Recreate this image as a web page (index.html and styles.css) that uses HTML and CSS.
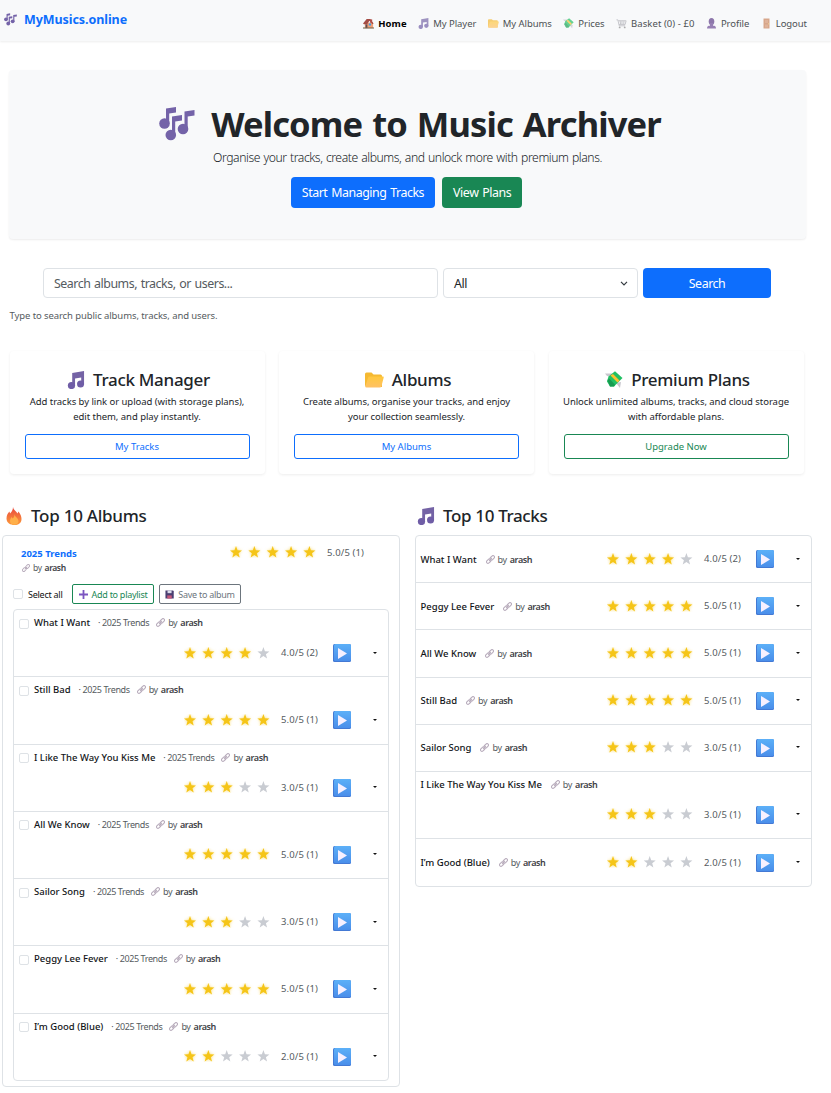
FILE: index.html
```html
<!DOCTYPE html>
<html lang="en">
<head>
<meta charset="utf-8">
<title>MyMusics.online</title>
<link rel="stylesheet" href="styles.css">
</head>
<body>
<svg class="sprite" aria-hidden="true">
  <defs>
    <path id="star" d="M6 0 7.5 4.2 12 4.4 8.5 7.2 9.7 11.6 6 9.1 2.3 11.6 3.5 7.2 0 4.4 4.500 4.200Z"/>
    <linearGradient id="blue" x1="0" y1="0" x2="0" y2="1"><stop offset="0" stop-color="#5cb0f8"/><stop offset="1" stop-color="#4a8eea"/></linearGradient>
    <linearGradient id="gold" x1="0" y1="0" x2="0" y2="1"><stop offset="0" stop-color="#ffc83d"/><stop offset="1" stop-color="#ffc164"/></linearGradient>
    <linearGradient id="flame" x1="0" y1="0" x2="0" y2="1"><stop offset="0" stop-color="#e8483e"/><stop offset="1" stop-color="#fd9a3a"/></linearGradient>
  </defs>
  <symbol id="stars5" viewBox="0 0 86 12"><g class="lit"><use href="#star"/><use href="#star" x="18.350"/><use href="#star" x="36.700"/><use href="#star" x="55.050"/><use href="#star" x="73.400"/></g></symbol>
  <symbol id="stars4" viewBox="0 0 86 12"><g class="lit"><use href="#star"/><use href="#star" x="18.350"/><use href="#star" x="36.700"/><use href="#star" x="55.050"/></g><g class="dim"><use href="#star" x="73.400"/></g></symbol>
  <symbol id="stars3" viewBox="0 0 86 12"><g class="lit"><use href="#star"/><use href="#star" x="18.350"/><use href="#star" x="36.700"/></g><g class="dim"><use href="#star" x="55.050"/><use href="#star" x="73.400"/></g></symbol>
  <symbol id="stars2" viewBox="0 0 86 12"><g class="lit"><use href="#star"/><use href="#star" x="18.350"/></g><g class="dim"><use href="#star" x="36.700"/><use href="#star" x="55.050"/><use href="#star" x="73.400"/></g></symbol>
  <symbol id="play" viewBox="0 0 18 18"><rect width="18" height="18" rx="1.500" fill="#4379d4"/><rect x="1" width="17" height="17" rx="1.500" fill="url(#blue)"/><path d="M5 4v11l9-5.500Z" fill="#f7f0ff"/></symbol>
  <symbol id="link" viewBox="0 0 20 20"><g fill="none" stroke="#b9adbd" stroke-width="2.400"><rect x="8.500" y="3" width="11" height="6.500" rx="3.200" transform="rotate(-45 14 6.200)"/><rect x=".5" y="10.500" width="11" height="6.500" rx="3.200" transform="rotate(-45 6 13.800)"/><path d="m7 13 6-6"/></g></symbol>
  <symbol id="note" viewBox="0 0 18 19"><path d="M5 2 17.500 0v14.500h-3V6.800L8 7.900v8H5Z" fill="#7463a5"/><circle cx="4.200" cy="15.300" r="3.800" fill="#6f5da6"/><circle cx="13.800" cy="13.600" r="3.700" fill="#6f5da6"/></symbol>
  <symbol id="notes" viewBox="0 0 36 34"><g fill="#7463a8"><path d="M7 1.500 17 0v5.500L10.200 6.500v10H7ZM13 9.500 23 8v5.500l-6.800 1v14H13ZM25.500 4.500 35.500 3v5.500l-6.800 1v13h-3.200Z"/><circle cx="5.500" cy="16.500" r="5.300"/><circle cx="11.800" cy="28" r="5.300"/><circle cx="24" cy="22" r="5.300"/></g></symbol>
  <symbol id="folder" viewBox="0 0 19 16"><path d="M0 2Q0 .5 1.500.5h5L8.500 2.500h7Q17 2.500 17 4v11H2Q0 15 0 13Z" fill="#f5b932"/><path d="M4.500 4.500H18Q19 4.500 18.700 5.600L16.500 14Q16.200 15.500 14.700 15.500H1.500Q0 15.500.4 14L3 5.700Q3.300 4.500 4.500 4.500Z" fill="url(#gold)"/></symbol>
  <symbol id="money" viewBox="0 0 18 18"><path d="M0 2.500h7l1 3-6-.5ZM11 12l5-1-1 6Z" fill="#c9c7ce"/><path d="M3.500 5.500 10 .3 17.500 7 9 15.500H5L2 10.500Z" fill="#21c063"/><path d="m2.500 9 2-1.200 5.500 6-1 1.700H5Z" fill="#169b50"/><path d="M5.500 4.500 8 3l6.500 6.500-2 2Z" fill="#fcc22f"/></symbol>
  <symbol id="house" viewBox="0 0 12 11"><path d="M2 4.500h9v6H2Z" fill="#f0a078"/><path d="M0 5.500 4 .5h4l3.500 5-1 .8L7 2.500 4.500 6.300H1Z" fill="#a44c45"/><path d="M8 1h2v4H8Z" fill="#b0504a"/><path d="M2.800 6.500h2v4h-2Z" fill="#5d4a51"/><path d="M6.300 5.500h2.500v2.200H6.300Z" fill="#3a9de5"/><path d="M0 9.800h12V11H0Z" fill="#7a6a50"/></symbol>
  <symbol id="cart" viewBox="0 0 12 11"><path d="M.5 1.500H2L3.500 8H10M2.500 2.500H11L10 6.500H3.300M4.500 2.500l.5 4M6.500 2.500v4M8.700 2.500l-.3 4" fill="none" stroke="#a9a9b0"/><circle cx="4" cy="9.800" r="1" fill="#888"/><circle cx="9.500" cy="9.800" r="1" fill="#888"/></symbol>
  <symbol id="bust" viewBox="0 0 11 11"><ellipse cx="5.500" cy="3.500" rx="2.800" ry="3.500" fill="#5c3b86"/><path d="M4 5h3v3H4ZM1 10.500Q1 7.500 4 7.500h3q3 0 3 3Z" fill="#6a4794"/></symbol>
  <symbol id="door" viewBox="0 0 11 11"><path d="M2.500.5h6v10h-6Z" fill="#c87f56"/><path d="M4 2h3v3H4ZM4 6.500h3v3H4Z" fill="#d4936e"/><circle cx="7.600" cy="5.800" r=".6" fill="#f1c75c"/></symbol>
  <symbol id="fire" viewBox="0 0 15 18"><path d="M6.500 0c.5 3 3 4 4.500 6.500l1-2c2 2.500 3 5 3 7.500 0 4-3 6-7 6s-8-2-8-6.500C0 8 1.500 6 3 4.500l.5 2C5 5 6.500 3 6.500 0Z" fill="url(#flame)"/><path d="M8 7c0 3 4 4 4 7.300 0 2.200-1.800 3.500-4.200 3.500S3.500 16.500 3.500 14c0-2 1-3 1.500-4l1 1.500C7.500 10.500 8 9 8 7Z" fill="#ffb04a"/></symbol>
  <symbol id="plus" viewBox="0 0 9 9"><path d="M3.600 0h1.800v3.600H9v1.800H5.400V9H3.600V5.400H0V3.600h3.600Z" fill="#7b55c0"/></symbol>
  <symbol id="floppy" viewBox="0 0 10 9"><path d="M.5 0H9l.7.8V9H.5Z" fill="#4a3f72"/><path d="M2.800 0h4.500v3H2.800Z" fill="#d9dbea"/><path d="M2.500 5.500h5V9h-5Z" fill="#c85a7c"/></symbol>
</svg>

<nav class="navbar">
  <a class="brand"><svg class="brand-icon"><use href="#notes"/></svg>MyMusics.online</a>
  <div class="nav-links">
    <a class="nav-link active"><svg><use href="#house"/></svg>Home</a>
    <a class="nav-link"><svg><use href="#note"/></svg>My Player</a>
    <a class="nav-link"><svg><use href="#folder"/></svg>My Albums</a>
    <a class="nav-link"><svg><use href="#money"/></svg>Prices</a>
    <a class="nav-link basket"><svg><use href="#cart"/></svg>Basket (0) - £0</a>
    <a class="nav-link"><svg><use href="#bust"/></svg>Profile</a>
    <a class="nav-link"><svg><use href="#door"/></svg>Logout</a>
  </div>
</nav>

<header class="hero">
  <h1><svg><use href="#notes"/></svg><span>Welcome to Music Archiver</span></h1>
  <p class="lead">Organise your tracks, create albums, and unlock more with premium plans.</p>
  <div class="hero-actions"><a class="btn primary">Start Managing Tracks</a><a class="btn success">View Plans</a></div>
</header>

<form class="search">
  <div class="field">Search albums, tracks, or users...</div>
  <div class="field select">All<svg viewBox="0 0 8 5"><path d="m1 .8 3 3 3-3" fill="none" stroke="#343a40" stroke-width="1.200"/></svg></div>
  <a class="btn primary">Search</a>
</form>
<p class="help">Type to search public albums, tracks, and users.</p>

<section class="cards">
  <article class="card">
    <h2><svg class="w18"><use href="#note"/></svg>Track Manager</h2>
    <p>Add tracks by link or upload (with storage plans),<br>edit them, and play instantly.</p>
    <a class="outline">My Tracks</a>
  </article>
  <article class="card">
    <h2><svg class="w19"><use href="#folder"/></svg>Albums</h2>
    <p>Create albums, organise your tracks, and enjoy<br>your collection seamlessly.</p>
    <a class="outline">My Albums</a>
  </article>
  <article class="card">
    <h2><svg class="w18"><use href="#money"/></svg>Premium Plans</h2>
    <p>Unlock unlimited albums, tracks, and cloud storage<br>with affordable plans.</p>
    <a class="outline green">Upgrade Now</a>
  </article>
</section>

<main class="columns">
  <section class="albums">
    <h2><svg><use href="#fire"/></svg>Top 10 Albums</h2>
    <div class="album">
      <div class="album-head">
        <div><a class="album-title">2025 Trends</a><div class="by"><svg><use href="#link"/></svg>by <b>arash</b></div></div>
        <div class="album-rating"><svg class="stars"><use href="#stars5"/></svg><span class="score">5.0/5 (1)</span></div>
      </div>
      <div class="tools"><i class="check"></i><span class="select-all">Select all</span><a class="tool green"><svg><use href="#plus"/></svg>Add to playlist</a><a class="tool"><svg><use href="#floppy"/></svg>Save to album</a></div>
      <div class="list">
        <div class="track"><div class="info"><i class="check"></i><span class="name">What I Want</span><span class="from">· 2025 Trends</span><span class="by"><svg><use href="#link"/></svg>by <b>arash</b></span></div><div class="controls"><svg class="stars"><use href="#stars4"/></svg><span class="score">4.0/5 (2)</span><svg class="play"><use href="#play"/></svg><i class="caret"></i></div></div>
        <div class="track"><div class="info"><i class="check"></i><span class="name">Still Bad</span><span class="from">· 2025 Trends</span><span class="by"><svg><use href="#link"/></svg>by <b>arash</b></span></div><div class="controls"><svg class="stars"><use href="#stars5"/></svg><span class="score">5.0/5 (1)</span><svg class="play"><use href="#play"/></svg><i class="caret"></i></div></div>
        <div class="track"><div class="info"><i class="check"></i><span class="name">I Like The Way You Kiss Me</span><span class="from">· 2025 Trends</span><span class="by"><svg><use href="#link"/></svg>by <b>arash</b></span></div><div class="controls"><svg class="stars"><use href="#stars3"/></svg><span class="score">3.0/5 (1)</span><svg class="play"><use href="#play"/></svg><i class="caret"></i></div></div>
        <div class="track"><div class="info"><i class="check"></i><span class="name">All We Know</span><span class="from">· 2025 Trends</span><span class="by"><svg><use href="#link"/></svg>by <b>arash</b></span></div><div class="controls"><svg class="stars"><use href="#stars5"/></svg><span class="score">5.0/5 (1)</span><svg class="play"><use href="#play"/></svg><i class="caret"></i></div></div>
        <div class="track"><div class="info"><i class="check"></i><span class="name">Sailor Song</span><span class="from">· 2025 Trends</span><span class="by"><svg><use href="#link"/></svg>by <b>arash</b></span></div><div class="controls"><svg class="stars"><use href="#stars3"/></svg><span class="score">3.0/5 (1)</span><svg class="play"><use href="#play"/></svg><i class="caret"></i></div></div>
        <div class="track"><div class="info"><i class="check"></i><span class="name">Peggy Lee Fever</span><span class="from">· 2025 Trends</span><span class="by"><svg><use href="#link"/></svg>by <b>arash</b></span></div><div class="controls"><svg class="stars"><use href="#stars5"/></svg><span class="score">5.0/5 (1)</span><svg class="play"><use href="#play"/></svg><i class="caret"></i></div></div>
        <div class="track"><div class="info"><i class="check"></i><span class="name">I’m Good (Blue)</span><span class="from">· 2025 Trends</span><span class="by"><svg><use href="#link"/></svg>by <b>arash</b></span></div><div class="controls"><svg class="stars"><use href="#stars2"/></svg><span class="score">2.0/5 (1)</span><svg class="play"><use href="#play"/></svg><i class="caret"></i></div></div>
      </div>
    </div>
  </section>
  <section class="tracks">
    <h2><svg><use href="#note"/></svg>Top 10 Tracks</h2>
    <div class="list">
      <div class="row"><div class="info"><span class="name">What I Want</span><span class="by"><svg><use href="#link"/></svg>by <b>arash</b></span></div><div class="controls"><svg class="stars"><use href="#stars4"/></svg><span class="score">4.0/5 (2)</span><svg class="play"><use href="#play"/></svg><i class="caret"></i></div></div>
      <div class="row"><div class="info"><span class="name">Peggy Lee Fever</span><span class="by"><svg><use href="#link"/></svg>by <b>arash</b></span></div><div class="controls"><svg class="stars"><use href="#stars5"/></svg><span class="score">5.0/5 (1)</span><svg class="play"><use href="#play"/></svg><i class="caret"></i></div></div>
      <div class="row"><div class="info"><span class="name">All We Know</span><span class="by"><svg><use href="#link"/></svg>by <b>arash</b></span></div><div class="controls"><svg class="stars"><use href="#stars5"/></svg><span class="score">5.0/5 (1)</span><svg class="play"><use href="#play"/></svg><i class="caret"></i></div></div>
      <div class="row"><div class="info"><span class="name">Still Bad</span><span class="by"><svg><use href="#link"/></svg>by <b>arash</b></span></div><div class="controls"><svg class="stars"><use href="#stars5"/></svg><span class="score">5.0/5 (1)</span><svg class="play"><use href="#play"/></svg><i class="caret"></i></div></div>
      <div class="row"><div class="info"><span class="name">Sailor Song</span><span class="by"><svg><use href="#link"/></svg>by <b>arash</b></span></div><div class="controls"><svg class="stars"><use href="#stars3"/></svg><span class="score">3.0/5 (1)</span><svg class="play"><use href="#play"/></svg><i class="caret"></i></div></div>
      <div class="row wrap"><div class="info"><span class="name">I Like The Way You Kiss Me</span><span class="by"><svg><use href="#link"/></svg>by <b>arash</b></span></div><div class="controls"><svg class="stars"><use href="#stars3"/></svg><span class="score">3.0/5 (1)</span><svg class="play"><use href="#play"/></svg><i class="caret"></i></div></div>
      <div class="row"><div class="info"><span class="name">I’m Good (Blue)</span><span class="by"><svg><use href="#link"/></svg>by <b>arash</b></span></div><div class="controls"><svg class="stars"><use href="#stars2"/></svg><span class="score">2.0/5 (1)</span><svg class="play"><use href="#play"/></svg><i class="caret"></i></div></div>
    </div>
  </section>
</main>
</body>
</html>
```
FILE: styles.css
```css
* { box-sizing: border-box; }
body { margin: 0; background: #fff; color: #212529; font: 400 9.5px/15px "Noto Sans", "Open Sans", sans-serif; height: 1093px; overflow: hidden; }
h1, h2, p { margin: 0; }
svg { display: block; flex: none; overflow: visible; }
.sprite { position: absolute; width: 0; height: 0; }

.navbar { display: flex; justify-content: space-between; height: 41px; padding: 0 24px 0 4px; background: #f8f9fa; box-shadow: 0 1px 2px rgba(0,0,0,.075); }
.brand { display: flex; align-items: center; gap: 7px; height: 39px; color: #0d6efd; font-size: 12.500px; font-weight: 700; letter-spacing: -.07px; }
.brand-icon { width: 13px; height: 13px; }
.nav-links { display: flex; align-items: center; gap: 11.500px; height: 46px; }
.nav-link { display: flex; align-items: center; gap: 4px; color: #4d5154; letter-spacing: -.06px; white-space: nowrap; }
.nav-link svg { width: 11px; height: 11px; opacity: .68; }
.nav-link.basket { letter-spacing: .06px; }
.nav-link.active { color: #000; font-weight: 700; letter-spacing: .1px; }
.nav-link.active svg { opacity: 1; }

.hero { margin: 29px 25px 0 9px; height: 169px; padding-top: 32px; background: #f8f9fa; border-radius: 4px; box-shadow: 0 1px 2px rgba(0,0,0,.075); text-align: center; }
h1 { display: flex; justify-content: center; align-items: center; gap: 16px; height: 43px; padding-left: 5px; font-size: 34.500px; font-weight: 700; letter-spacing: -.85px; word-spacing: 1.700px; line-height: 43px; white-space: nowrap; }
h1 svg { width: 36px; height: 34px; }
.lead { height: 32px; padding-top: 1px; font-size: 12.200px; font-weight: 300; letter-spacing: -.44px; word-spacing: .7px; line-height: 24px; }
.hero-actions { display: flex; justify-content: center; gap: 7px; padding-right: 2px; }
.btn { display: flex; align-items: center; justify-content: center; height: 31px; padding: 0 11px; border-radius: 4px; color: #fff; font-size: 12.400px; letter-spacing: -.45px; word-spacing: 1px; white-space: nowrap; }
.primary { background: #0d6efd; }
.success { background: #198754; }

.search { display: flex; gap: 5px; margin: 29px 60px 0 43px; height: 30px; }
.search .btn { width: 128px; height: 30px; }
.field { display: flex; align-items: center; width: 395px; padding: 0 10px; border: 1px solid #dee2e6; border-radius: 4px; color: #555b60; font-size: 12.400px; letter-spacing: -.48px; word-spacing: 1px; }
.select { justify-content: space-between; width: 195px; color: #212529; }
.select svg { width: 8px; height: 5px; margin-right: -1px; }
.help { margin: 10px 0 0 9.500px; color: #555b60; letter-spacing: -.095px; }

.cards { display: grid; grid-template-columns: repeat(3, 255px); gap: 14.500px; margin: 28px 0 0 9.500px; }
.card { height: 123px; padding: 17px 15px 0; border-radius: 4px; box-shadow: 0 1px 3px rgba(0,0,0,.075); text-align: center; }
h2 { display: flex; align-items: center; font-size: 17px; font-weight: 500; letter-spacing: -.3px; line-height: 22px; }
.card h2 { justify-content: center; gap: 8px; height: 24px; padding-left: 3px; }
.w18 { width: 18px; height: 18px; }
.w19 { width: 19px; height: 16px; }
.card p { margin: 2px -5px 10px; letter-spacing: -.045px; }
.outline { display: flex; align-items: center; justify-content: center; height: 25px; border: 1px solid #0d6efd; border-radius: 3px; color: #0d6efd; }
.green { border-color: #198754 !important; color: #198754 !important; }

.columns { display: grid; grid-template-columns: 398px 397px; gap: 15px; margin: 31px 0 0 2px; }
.columns h2 { height: 22px; margin-bottom: 8px; padding-left: 4px; gap: 9px; letter-spacing: -.25px; }
.columns h2 svg { width: 16px; height: 18px; }
.tracks h2 { padding-left: 2px !important; gap: 8px; letter-spacing: -.35px; }
.tracks h2 svg { width: 18px; height: 18px; }
.album { height: 552px; padding: 10px 10px 0; border: 1px solid #dee2e6; border-radius: 4px; }
.album-head { display: flex; justify-content: space-between; height: 38px; padding: 0 25px 0 8px; }
.album-title { display: block; color: #0d6efd; font-weight: 700; }
.by { display: flex; align-items: center; gap: 3px; color: #555b60; font-size: 9px; letter-spacing: -.4px; white-space: nowrap; }
.by svg { width: 9px; height: 9px; }
.by b { font-weight: 600; color: #3d4145; }
.album-head .by { font-size: 8.500px; margin-top: -1px; }
.album-head .by svg { margin-left: 1px; width: 8px; height: 8px; }
.album-rating { display: flex; align-items: center; gap: 11px; height: 12px; }
.stars { width: 86px; height: 12px; }
.lit { fill: #f5c518; filter: drop-shadow(0 0 1.500px rgba(245,197,24,.6)); }
.dim { fill: #c9ccd2; }
.score { width: 37px; color: #555b60; letter-spacing: .11px; white-space: nowrap; }
.tools { display: flex; align-items: center; height: 20px; }
.check { display: block; flex: none; width: 10px; height: 10px; border: 1px solid #dee2e6; border-radius: 2px; }
.select-all { width: 44px; margin-left: 5px; font-size: 9px; letter-spacing: -.25px; white-space: nowrap; color: #111; }
.tool { display: flex; align-items: center; justify-content: center; gap: 4px; width: 82px; height: 20px; margin-right: 5px; border: 1px solid #6c757d; border-radius: 2px; color: #6c757d; font-size: 9px; letter-spacing: -.27px; white-space: nowrap; }
.tool svg { width: 9px; height: 9px; }
.list { border: 1px solid #dee2e6; border-radius: 4px; }
.album .list { margin-top: 5px; height: 472px; }
.track { height: 67.250px; padding: 5px 11px 0 5px; border-bottom: 1px solid #dee2e6; }
.track:last-child, .row:last-child { border-bottom: 0; }
.info { display: flex; align-items: center; }
.info .check { margin: 2px 5px 0 0; }
.name { color: #111417; font-weight: 550; letter-spacing: 0; white-space: nowrap; }
.from { margin-left: 8px; color: #555b60; font-size: 9px; letter-spacing: -.4px; white-space: nowrap; }
.from + .by { margin-left: 7px; }
.controls { display: flex; align-items: center; }
.track .controls { justify-content: flex-end; margin-top: 13px; }
.controls .score { margin-left: 11px; }
.play { width: 18px; height: 18px; margin: 1px 22px 0 15px; }
.caret { width: 4px; border: 2px solid transparent; border-top-color: #111; border-bottom: 0; }
.row { display: flex; align-items: center; justify-content: space-between; height: 47.200px; padding: 0 11px 0 4.500px; border-bottom: 1px solid #dee2e6; }
.row .by { margin-left: 9px; }
.row .controls { padding-bottom: 1px; }
.row.wrap { flex-direction: column; align-items: stretch; justify-content: flex-start; height: 67.200px; padding-top: 5px; }
.wrap .controls { justify-content: flex-end; margin-top: 13px; }
```
